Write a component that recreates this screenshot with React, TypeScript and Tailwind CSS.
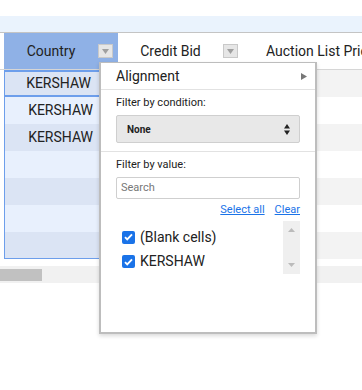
import React from "react";

const rows = ["KERSHAW", "KERSHAW", "KERSHAW", "", "", "", ""];

function FilterButton() {
  return (
    <span className="flex h-[14px] w-[15px] items-center justify-center border border-[#c9c9c9] bg-[#e6e6e6]">
      <svg width="7" height="5" viewBox="0 0 7 5">
        <path d="M0 0h7L3.5 5z" fill="#a0a0a0" />
      </svg>
    </span>
  );
}

function Check() {
  return (
    <span className="flex h-[13px] w-[13px] items-center justify-center rounded-[2px] bg-[#1a73e8]">
      <svg width="9" height="8" viewBox="0 0 9 8">
        <path d="M1 4.2l2.2 2.2L8 1.3" fill="none" stroke="#fff" strokeWidth="1.9" />
      </svg>
    </span>
  );
}

export default function App() {
  return (
    <div
      className="relative h-[390px] w-[362px] overflow-hidden bg-white text-[#222]"
      style={{ fontFamily: "Roboto, 'Liberation Sans', sans-serif" }}
    >
      <div className="h-[16px]" />
      <div className="h-[16px] bg-[#eaf3fd]" />
      <div className="h-px bg-[#c4c4c4]" />

      {/* header */}
      <div className="flex h-[36px] w-[520px] text-[14px]">
        <div className="w-[4px]" />
        <div className="flex w-[114px] items-center bg-[#8fb1e6] pr-[5px]">
          <span className="flex-1 text-center">Country</span>
          <FilterButton />
        </div>
        <div className="flex w-[126px] items-center pr-[6px]">
          <span className="flex-1 text-center">Credit Bid</span>
          <FilterButton />
        </div>
        <div className="flex items-center pl-[22px] whitespace-nowrap">Auction List Price</div>
      </div>

      {/* rows */}
      <div className="flex flex-col border-t border-[#d6d6d6]">
        {rows.map((r, i) => (
          <div key={i} className="flex h-[27px]">
            <div className="w-[4px] bg-white" />
            <div
              className={`flex w-[114px] items-center justify-end border-l border-[#6d9eeb] pr-[25px] text-[14px] ${
                i % 2 === 0 ? "bg-[#dbe4f4]" : "bg-[#e8f0fd]"
              } ${i === 0 ? "border-2 border-[#4a86e8] pr-[24px]" : ""} ${
                i === rows.length - 1 ? "border-b" : ""
              }`}
            >
              {r}
            </div>
            <div className={`flex-1 ${i % 2 === 0 ? "bg-[#f3f3f3]" : "bg-white"}`} />
          </div>
        ))}
      </div>

      {/* horizontal scrollbar */}
      <div className="mt-[7px] flex h-[17px] items-center bg-[#f1f1f1]">
        <div className="h-[12px] w-[42px] bg-[#c1c1c1]" />
      </div>

      {/* filter popup */}
      <div className="absolute left-[99px] top-[62px] flex h-[272px] w-[218px] flex-col border-2 border-t border-[#bdbdbd] bg-white shadow-[0_2px_4px_rgba(0,0,0,0.15)]">
        <div className="flex h-[26px] items-center justify-between pl-[15px] pr-[8px] text-[14px]">
          <span>Alignment</span>
          <svg width="6" height="7" viewBox="0 0 6 7">
            <path d="M0 0l6 3.5L0 7z" fill="#777" />
          </svg>
        </div>
        <div className="border-t border-[#e2e2e2] px-[15px] pt-[6px] pb-[8px]">
          <div className="text-[11px] leading-[14px]">Filter by condition:</div>
          <div className="mt-[5px] flex h-[28px] items-center justify-between rounded-[2px] border border-[#cfcfcf] bg-[#e8e8e8] pl-[10px] pr-[9px]">
            <span className="text-[10px] font-bold">None</span>
            <svg width="6" height="11" viewBox="0 0 6 11">
              <path d="M0 4.5L3 0l3 4.5zM0 6.5h6L3 11z" fill="#222" />
            </svg>
          </div>
        </div>
        <div className="border-t border-[#e2e2e2] px-[15px] pt-[6px]">
          <div className="text-[11px] leading-[14px]">Filter by value:</div>
          <div className="mt-[5px] flex h-[22px] items-center rounded-[2px] border border-[#cfcfcf] pl-[4px] text-[11px] text-[#777]">
            Search
          </div>
          <div className="mt-[4px] flex h-[14px] justify-end gap-[10px] text-[11px] leading-[14px] text-[#1a73e8]">
            <span className="underline">Select all</span>
            <span className="underline">Clear</span>
          </div>
          <div className="mt-[4px] flex h-[53px]">
            <div className="flex flex-1 flex-col pt-[4px] pl-[6px] text-[14px]">
              <div className="flex h-[25px] items-center gap-[5px]">
                <Check />
                <span>(Blank cells)</span>
              </div>
              <div className="flex h-[25px] items-center gap-[5px]">
                <Check />
                <span>KERSHAW</span>
              </div>
            </div>
            <div className="flex w-[17px] flex-col items-center justify-between bg-[#efefef] py-[7px]">
              <svg width="7" height="4" viewBox="0 0 7 4">
                <path d="M0 4h7L3.5 0z" fill="#bbb" />
              </svg>
              <svg width="7" height="4" viewBox="0 0 7 4">
                <path d="M0 0h7L3.5 4z" fill="#bbb" />
              </svg>
            </div>
          </div>
        </div>
      </div>
    </div>
  );
}
